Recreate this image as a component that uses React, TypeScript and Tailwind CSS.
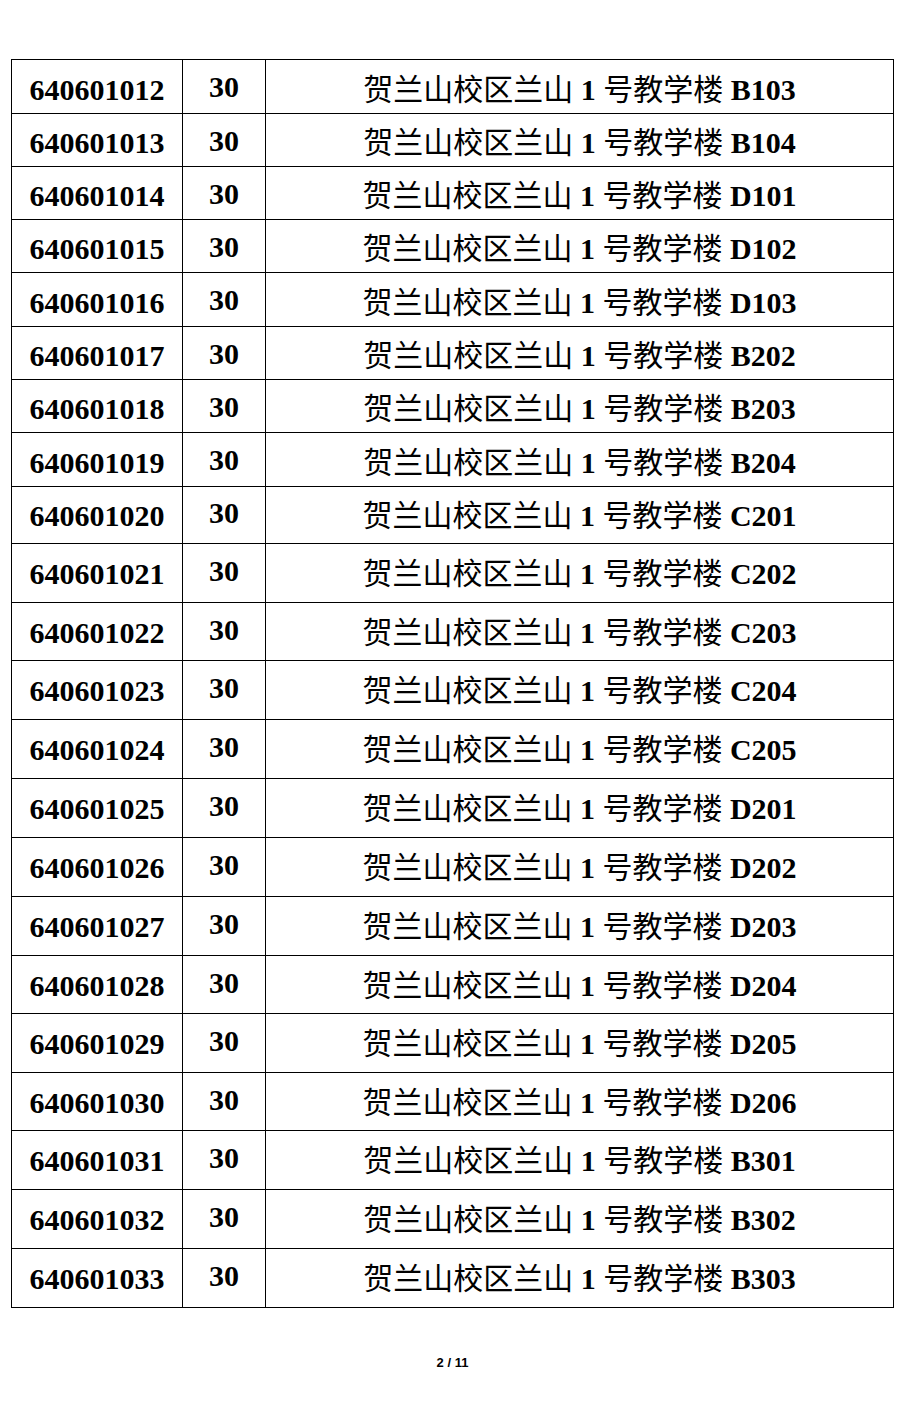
const rows: { id: string; room: string; h: string; tall: boolean }[] = [
  { id: "640601012", room: "B103", h: "h-[54px]", tall: false },
  { id: "640601013", room: "B104", h: "h-[53px]", tall: false },
  { id: "640601014", room: "D101", h: "h-[53px]", tall: false },
  { id: "640601015", room: "D102", h: "h-[53px]", tall: false },
  { id: "640601016", room: "D103", h: "h-[54px]", tall: false },
  { id: "640601017", room: "B202", h: "h-[53px]", tall: false },
  { id: "640601018", room: "B203", h: "h-[53px]", tall: false },
  { id: "640601019", room: "B204", h: "h-[54px]", tall: false },
  { id: "640601020", room: "C201", h: "h-[57px]", tall: true },
  { id: "640601021", room: "C202", h: "h-[59px]", tall: true },
  { id: "640601022", room: "C203", h: "h-[58px]", tall: true },
  { id: "640601023", room: "C204", h: "h-[59px]", tall: true },
  { id: "640601024", room: "C205", h: "h-[59px]", tall: true },
  { id: "640601025", room: "D201", h: "h-[59px]", tall: true },
  { id: "640601026", room: "D202", h: "h-[59px]", tall: true },
  { id: "640601027", room: "D203", h: "h-[59px]", tall: true },
  { id: "640601028", room: "D204", h: "h-[58px]", tall: true },
  { id: "640601029", room: "D205", h: "h-[59px]", tall: true },
  { id: "640601030", room: "D206", h: "h-[58px]", tall: true },
  { id: "640601031", room: "B301", h: "h-[59px]", tall: true },
  { id: "640601032", room: "B302", h: "h-[59px]", tall: true },
  { id: "640601033", room: "B303", h: "h-[58px]", tall: true },
];

export default function App() {
  return (
    <div className="w-[914px] h-[1414px] bg-white pt-[59px] pl-[11px] font-['Liberation_Serif','Noto_Sans_CJK_SC',serif] text-black">
      {/* Room table */}
      <div className="w-[883px] border border-black">
        {rows.map((r, i) => (
          <div
            key={r.id}
            className={`flex ${r.h} ${i < rows.length - 1 ? "border-b border-black" : ""}`}
          >
            <div
              className={`w-[171px] flex items-center justify-center border-r border-black text-[30px] leading-none font-bold ${
                r.tall ? "pt-[2px]" : "pt-[6px]"
              }`}
            >
              {r.id}
            </div>
            <div
              className={`w-[83px] flex items-center justify-center border-r border-black text-[30px] leading-none font-bold ${
                r.tall ? "pb-[4px]" : "pt-[1px]"
              }`}
            >
              30
            </div>
            <div
              className={`flex-1 flex items-center justify-center text-[30px] leading-none ${
                r.tall ? "pt-[2px]" : "pt-[6px]"
              }`}
            >
              <span className="whitespace-pre">
                <span className="font-normal">贺兰山校区兰山 </span>
                <span className="font-bold">1</span>
                <span className="font-normal"> 号教学楼 </span>
                <span className="font-bold">{r.room}</span>
              </span>
            </div>
          </div>
        ))}
      </div>

      {/* Page number */}
      <div className="w-[883px] mt-[48px] text-center text-[13px] leading-[13px] font-bold font-['Liberation_Sans',sans-serif]">
        2 / 11
      </div>
    </div>
  );
}
